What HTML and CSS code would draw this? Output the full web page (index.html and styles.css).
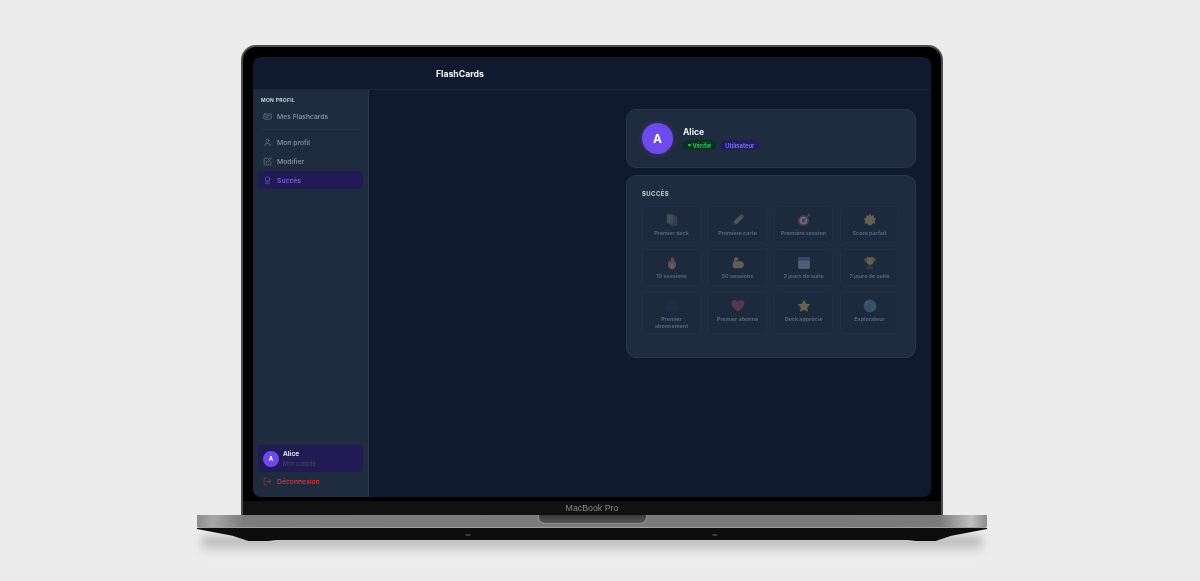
FILE: index.html
```html
<!DOCTYPE html>
<html lang="fr">
<head>
    <meta charset="UTF-8">
    <meta name="viewport" content="width=device-width, initial-scale=1.0">
    <title>FlashCards</title>
    <link rel="stylesheet" href="styles.css">
</head>
<body>
    <div class="laptop">
        <div class="lid">
            <div class="screen">
                <header class="topbar">
                    <span class="brand">FlashCards</span>
                </header>
                <div class="app">
                    <aside class="sidebar">
                        <div class="side-title">MON PROFIL</div>
                        <a class="nav-item">
                            <svg class="nav-icon" viewBox="0 0 24 24"><rect x="2" y="5" width="20" height="14" rx="2"/><path d="M6 10h12M6 14h7"/></svg>
                            Mes Flashcards
                        </a>
                        <div class="side-line"></div>
                        <a class="nav-item">
                            <svg class="nav-icon" viewBox="0 0 24 24"><path d="M19 21v-2a4 4 0 0 0-4-4H9a4 4 0 0 0-4 4v2"/><circle cx="12" cy="7" r="4"/></svg>
                            Mon profil
                        </a>
                        <a class="nav-item">
                            <svg class="nav-icon" viewBox="0 0 24 24"><path d="M12 3H5a2 2 0 0 0-2 2v14a2 2 0 0 0 2 2h14a2 2 0 0 0 2-2v-7"/><path d="M18.375 2.625a1 1 0 0 1 3 3l-9.013 9.014a2 2 0 0 1-.853.505l-2.873.84a.5.5 0 0 1-.62-.62l.84-2.873a2 2 0 0 1 .506-.852z"/></svg>
                            Modifier
                        </a>
                        <a class="nav-item active">
                            <svg class="nav-icon" viewBox="0 0 24 24"><path d="m15.477 12.89 1.515 8.526a.5.5 0 0 1-.81.47l-3.58-2.687a1 1 0 0 0-1.197 0l-3.586 2.686a.5.5 0 0 1-.81-.469l1.514-8.526"/><circle cx="12" cy="8" r="6"/></svg>
                            Succès
                        </a>
                        <div class="side-bottom">
                            <div class="user-box">
                                <div class="user-avatar">A</div>
                                <div>
                                    <div class="user-name">Alice</div>
                                    <div class="user-sub">Mon compte</div>
                                </div>
                            </div>
                            <a class="nav-item logout">
                                <svg class="nav-icon" viewBox="0 0 24 24"><path d="m16 17 5-5-5-5"/><path d="M21 12H9"/><path d="M9 21H5a2 2 0 0 1-2-2V5a2 2 0 0 1 2-2h4"/></svg>
                                Déconnexion
                            </a>
                        </div>
                    </aside>
                    <main class="main">
                        <div class="column">
                            <section class="card profile-card">
                                <div class="avatar">A</div>
                                <div>
                                    <div class="profile-name">Alice</div>
                                    <div class="badges">
                                        <span class="badge badge-green"><i class="dot"></i>Vérifié</span>
                                        <span class="badge badge-purple">Utilisateur</span>
                                    </div>
                                </div>
                            </section>
                            <section class="card success-card">
                                <h2 class="card-title">SUCCÈS</h2>
                                <div class="grid">
                                    <div class="tile">
                                        <svg class="emoji" viewBox="0 0 24 24"><rect x="10" y="6" width="11" height="16" rx="1" fill="#4f6f9a"/><rect x="7" y="4" width="11" height="16" rx="1" fill="#a04a55"/><rect x="3" y="2" width="11" height="16" rx="1" fill="#5f9a6a"/></svg>
                                        <span>Premier deck</span>
                                    </div>
                                    <div class="tile">
                                        <svg class="emoji" viewBox="0 0 24 24"><path d="M3 21l1.500-6L16 3.500l4.500 4.500L9 19.500z" fill="#b8a080"/><path d="M15 4.500l2-2a2 2 0 0 1 2.800 0l1.700 1.700a2 2 0 0 1 0 2.800l-2 2z" fill="#d06a70"/><path d="M3 21l1.500-6 4.500 4.500z" fill="#3a4050"/></svg>
                                        <span>Première carte</span>
                                    </div>
                                    <div class="tile">
                                        <svg class="emoji" viewBox="0 0 24 24"><circle cx="11" cy="13" r="9.500" fill="#c4505c"/><circle cx="11" cy="13" r="6.500" fill="#e8e8f0"/><circle cx="11" cy="13" r="3.500" fill="#c4505c"/><path d="M11 13L20 4" stroke="#5a8fd0" stroke-width="2"/><path d="M18 2l1 3 3 1 2-3-3-.500-.500-2.500z" fill="#5a8fd0"/></svg>
                                        <span>Première session</span>
                                    </div>
                                    <div class="tile">
                                        <svg class="emoji" viewBox="0 0 24 24"><path d="M12 1l2.500 4 4.500-1.500-.500 4.500 4.500 2-3.500 3.500 2 4.500-5 .200L14 22l-2-2-2 2-2.500-3.800-5-.200 2-4.500L1 10l4.500-2L5 3.500 9.500 5z" fill="#e8c860"/></svg>
                                        <span>Score parfait</span>
                                    </div>
                                    <div class="tile">
                                        <svg class="emoji" viewBox="0 0 24 24"><path d="M12 1c1 3 7 7 7 14a7 8 0 0 1-14 0c0-3 1-6 3-8 0 2 .500 3 1.500 3 1-3 .500-6 2.500-9z" fill="#e8845a"/><path d="M12 12c.500 2 3.500 3.500 3.500 6a3.500 4 0 0 1-7 0c0-2 3-3.500 3.500-6z" fill="#f0c080"/></svg>
                                        <span>10 sessions</span>
                                    </div>
                                    <div class="tile">
                                        <svg class="emoji" viewBox="0 0 24 24"><path d="M4 20c-2-4-1-9 2-13l-1-3 3-2 4 1 1 3-3 2-1 3c2-2 5-3 7-2 4 0 6 3 6 6 0 4-3 6-7 6H7c-1 0-2 0-3-1z" fill="#e8b860"/></svg>
                                        <span>50 sessions</span>
                                    </div>
                                    <div class="tile">
                                        <svg class="emoji" viewBox="0 0 24 24"><rect x="2" y="2" width="20" height="20" rx="2.500" fill="#b8c4dc"/><path d="M2 8V4.500A2.500 2.500 0 0 1 4.500 2h15A2.500 2.500 0 0 1 22 4.500V8z" fill="#3f7fd0"/><path d="M6 11h2v2H6zM11 11h2v2h-2zM16 11h2v2h-2zM6 16h2v2H6zM11 16h2v2h-2zM16 16h2v2h-2z" fill="#7a86a0"/></svg>
                                        <span>3 jours de suite</span>
                                    </div>
                                    <div class="tile">
                                        <svg class="emoji" viewBox="0 0 24 24"><path d="M6 2h12v7a6 6 0 0 1-12 0z" fill="#e8c060"/><path d="M6 4H2c0 4 1 6 4 7zM18 4h4c0 4-1 6-4 7z" fill="#b89440"/><path d="M11 14h2v4h-2z" fill="#b89440"/><path d="M7 18h10v4H7z" fill="#7a5a3a"/></svg>
                                        <span>7 jours de suite</span>
                                    </div>
                                    <div class="tile">
                                        <svg class="emoji" viewBox="0 0 24 24"><g fill="#2d2a70"><circle cx="7" cy="7" r="4"/><circle cx="17" cy="7" r="4"/><path d="M1 21c0-6 2-9 6-9 2 0 3 .500 4 2v7zM13 21v-7c1-1.500 2-2 4-2 4 0 6 3 6 9z"/></g></svg>
                                        <span>Premier abonnement</span>
                                    </div>
                                    <div class="tile">
                                        <svg class="emoji" viewBox="0 0 24 24"><path d="M12 22C5 16 1 12 1 7.500A5.800 5.800 0 0 1 12 5a5.800 5.800 0 0 1 11 2.500C23 12 19 16 12 22z" fill="#d84a78"/></svg>
                                        <span>Premier abonné</span>
                                    </div>
                                    <div class="tile">
                                        <svg class="emoji" viewBox="0 0 24 24"><path d="M12 1l3.400 7.300 7.600.900-5.600 5.300 1.500 7.900L12 18.500l-6.900 3.900 1.500-7.900L1 9.200l7.600-.900z" fill="#f0cc60"/></svg>
                                        <span>Deck apprécié</span>
                                    </div>
                                    <div class="tile">
                                        <svg class="emoji" viewBox="0 0 24 24"><circle cx="12" cy="12" r="11" fill="#4a8fd8"/><path d="M7 3c3 0 5 1 5 3s-3 2-4 4-3 2-5 2c-1-3 1-7 4-9zM14 11c3-1 6 0 8 2 0 4-3 7-6 8-2-2-1-4-2-6s-2-3 0-4z" fill="#70b080"/></svg>
                                        <span>Explorateur</span>
                                    </div>
                                </div>
                            </section>
                        </div>
                    </main>
                </div>
            </div>
            <div class="chin">MacBook Pro</div>
        </div>
        <div class="base"><div class="thumb"></div></div>
        <div class="under"></div>
        <div class="shadow"></div>
    </div>
</body>
</html>
```

FILE: styles.css
```css
:root {
    --page: #ececec;
    --app-bg: #101a2e;
    --panel: #1f2b3e;
    --line: #2a3649;
    --primary: #6d4aeb;
    --active-bg: #211a54;
}

* {
    box-sizing: border-box;
    margin: 0;
    padding: 0;
    font-family: Inter, "Liberation Sans", sans-serif;
}

body {
    background: var(--page);
    height: 581px;
    overflow: hidden;
}

/* laptop frame */
.laptop {
    width: 790px;
    margin: 45px 0 0 197px;
    display: flex;
    flex-direction: column;
    align-items: center;
}

.lid {
    width: 702px;
    height: 470px;
    background: #000;
    border: 2px solid #4d4d4d;
    border-bottom: none;
    border-radius: 15px 15px 0 0;
    padding: 10px 10px 0;
    display: flex;
    flex-direction: column;
}

.screen {
    height: 440px;
    background: var(--app-bg);
    border-radius: 8px;
    overflow: hidden;
    display: flex;
    flex-direction: column;
    filter: blur(0.5px);
}

.chin {
    height: 14px;
    margin: 4px -10px 0;
    background: #111;
    color: #8a8a8a;
    font-size: 8.800px;
    line-height: 15px;
    text-align: center;
    font-family: "Liberation Sans", sans-serif;
    filter: blur(0.3px);
}

.base {
    width: 790px;
    height: 13px;
    background: linear-gradient(90deg, #8c8c8c 0, #a8a8a8 2%, #7c7c7c 6%, #7a7a7a 94%, #c0c0c0 98%, #8c8c8c 100%);
    border-bottom: 1px solid #a0a0a0;
    border-radius: 0 0 2px 2px;
    display: flex;
    justify-content: center;
}

.thumb {
    width: 109px;
    height: 9px;
    background: linear-gradient(#3a3a3a, #555);
    border-radius: 0 0 7px 7px;
    border: 1px solid #8f8f8f;
    border-top: none;
}

.under {
    position: relative;
    z-index: 1;
    width: 790px;
    height: 13px;
    background:
        radial-gradient(ellipse 4px 1px at 271px 7px, #777, transparent),
        radial-gradient(ellipse 4px 1px at 518px 7px, #777, transparent),
        #0d0d0d;
    clip-path: polygon(0 0, 100% 0, 100% 8%, 95.500% 60%, 93.500% 100%, 91% 100%, 90% 92%, 10% 92%, 9% 100%, 6.500% 100%, 4.500% 60%, 0 8%);
}

.shadow {
    width: 780px;
    height: 16px;
    margin-top: -4px;
    background: linear-gradient(#a0a0a0, #ececec);
    filter: blur(5px);
}

/* top bar */
.topbar {
    height: 33px;
    flex: none;
    padding: 1px 0 0 183px;
    display: flex;
    align-items: center;
    border-bottom: 1px solid #1b2537;
}

.brand {
    color: #f1f5f9;
    font-size: 8.700px;
    font-weight: 700;
}

.app {
    flex: 1;
    display: flex;
    min-height: 0;
}

/* sidebar */
.sidebar {
    width: 116px;
    flex: none;
    background: var(--panel);
    border-right: 1px solid var(--line);
    padding: 7px 5px 7px;
    display: flex;
    flex-direction: column;
}

.side-title {
    color: #cbd5e1;
    font-size: 5px;
    font-weight: 700;
    letter-spacing: 0.3px;
    line-height: 6px;
    padding-left: 3px;
    margin-bottom: 4px;
}

.nav-item {
    height: 18px;
    flex: none;
    padding-left: 5px;
    margin-bottom: 1px;
    border-radius: 4px;
    display: flex;
    align-items: center;
    gap: 5px;
    color: #8b97aa;
    font-size: 6.800px;
    font-weight: 500;
}

.nav-icon {
    width: 9px;
    height: 9px;
    flex: none;
    fill: none;
    stroke: currentColor;
    stroke-width: 1.800;
    stroke-linecap: round;
    stroke-linejoin: round;
    opacity: 0.75;
}

.side-line {
    height: 1px;
    background: #263246;
    margin: 3px 3px 3px;
}

.nav-item.active {
    background: var(--active-bg);
    color: #7c6cf0;
}

.side-bottom {
    margin-top: auto;
}

.user-box {
    height: 27px;
    background: var(--active-bg);
    border-radius: 4px;
    padding-left: 5px;
    display: flex;
    align-items: center;
    gap: 4px;
}

.user-avatar {
    width: 16px;
    height: 16px;
    border-radius: 50%;
    background: var(--primary);
    color: #fff;
    font-size: 6px;
    font-weight: 700;
    display: grid;
    place-items: center;
}

.user-name {
    color: #e2e8f0;
    font-size: 6.500px;
    font-weight: 700;
    line-height: 9px;
    padding-top: 1px;
}

.user-sub {
    color: #414e68;
    font-size: 5.500px;
    line-height: 10px;
}

.logout {
    color: #d23a44;
    margin: 0;
}

/* main column */
.main {
    flex: 1;
    display: flex;
    justify-content: flex-end;
    padding: 19px 15px 0 0;
}

.column {
    width: 290px;
    display: flex;
    flex-direction: column;
    gap: 7px;
}

.card {
    background: var(--panel);
    border: 1px solid var(--line);
    border-radius: 10px;
}

.profile-card {
    height: 59px;
    padding-left: 15px;
    display: flex;
    align-items: center;
    gap: 10px;
}

.avatar {
    width: 31px;
    height: 31px;
    border-radius: 50%;
    background: var(--primary);
    box-shadow: 0 0 6px rgba(109, 74, 235, 0.35);
    color: #fff;
    font-size: 12px;
    font-weight: 700;
    display: grid;
    place-items: center;
}

.profile-name {
    color: #f1f5f9;
    font-size: 8.500px;
    font-weight: 700;
    line-height: 11px;
    margin-bottom: 2px;
}

.badges {
    display: flex;
    gap: 4px;
}

.badge {
    height: 10px;
    padding: 0 5px;
    border-radius: 5px;
    font-size: 5.800px;
    font-weight: 700;
    display: inline-flex;
    align-items: center;
    gap: 2px;
}

.badge-green {
    background: #06301f;
    color: #22c55e;
}

.badge-purple {
    background: #221c5c;
    color: #7468e8;
}

.dot {
    width: 2.500px;
    height: 2.500px;
    border-radius: 50%;
    background: #22c55e;
}

.success-card {
    height: 183px;
    padding: 13px 15px 0;
}

.card-title {
    color: #cbd5e1;
    font-size: 6px;
    font-weight: 700;
    letter-spacing: 0.4px;
    line-height: 10px;
    margin-bottom: 7px;
}

.grid {
    display: grid;
    grid-template-columns: repeat(4, 59px);
    grid-template-rows: 37px 37px 42px;
    gap: 6px 7px;
}

.tile {
    border: 1px solid #232f42;
    border-radius: 5px;
    background: rgba(15, 23, 42, 0.08);
    padding: 6px 3px 0;
    display: flex;
    flex-direction: column;
    align-items: center;
    text-align: center;
    color: #586478;
    font-size: 5.400px;
    font-weight: 700;
    line-height: 7px;
}

.tile span {
    max-width: 48px;
}

.emoji {
    width: 14px;
    height: 14px;
    flex: none;
    opacity: 0.36;
    filter: saturate(0.75);
    margin-bottom: 3px;
}
```
